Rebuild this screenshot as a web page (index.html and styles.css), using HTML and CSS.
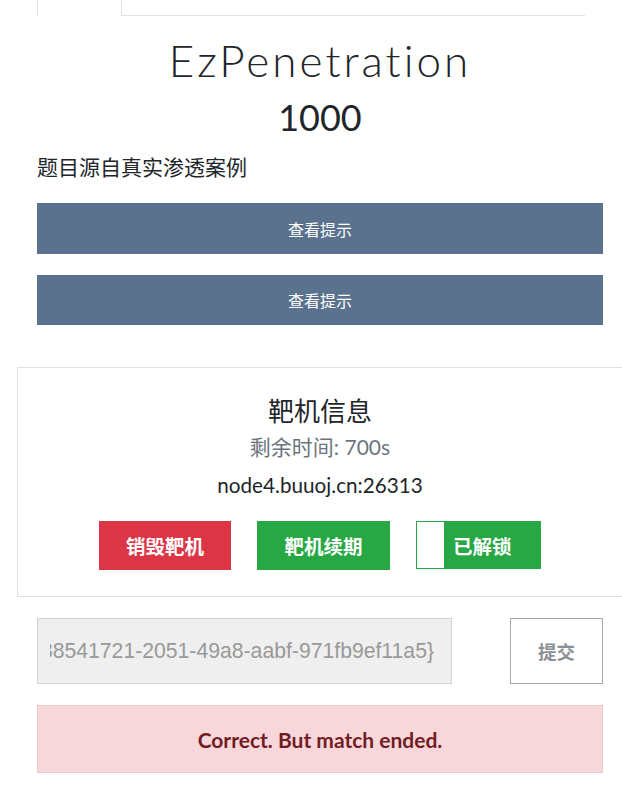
FILE: index.html
```html
<!DOCTYPE html>
<html lang="zh">
<head>
<meta charset="utf-8">
<title>EzPenetration</title>
<link rel="stylesheet" href="styles.css">
</head>
<body>
<div class="page">
  <div class="tabs">
    <div class="tab active"></div>
    <div class="tab-fill"></div>
  </div>

  <h2 class="chal-name">EzPenetration</h2>
  <h3 class="chal-value">1000</h3>
  <p class="chal-desc">题目源自真实渗透案例</p>

  <button class="hint-btn">查看提示</button>
  <button class="hint-btn second">查看提示</button>

  <div class="card">
    <h4 class="card-title">靶机信息</h4>
    <div class="remain">剩余时间: 700s</div>
    <div class="host">node4.buuoj.cn:26313</div>
    <div class="actions">
      <button class="act red">销毁靶机</button>
      <button class="act green">靶机续期</button>
      <button class="act unlocked"><span class="fill"></span><span class="label">已解锁</span></button>
    </div>
  </div>

  <div class="submit-row">
    <div class="flag-input">
      <div class="flag-clip"><span class="flag-text">flag{38541721-2051-49a8-aabf-971fb9ef11a5}</span></div>
    </div>
    <button class="submit-btn">提交</button>
  </div>

  <div class="alert">Correct. But match ended.</div>
</div>
</body>
</html>
```

FILE: styles.css
```css
html, body {
  margin: 0;
  padding: 0;
  overflow-x: hidden;
  background: #fff;
}

body {
  font-family: Lato, "Noto Sans CJK SC", sans-serif;
  color: #212529;
}

.page {
  margin-left: 37px;
  width: 566px;
  display: flex;
  flex-direction: column;
}

.tabs {
  display: flex;
  width: 548px;
  height: 16px;
}

.tab {
  width: 83px;
  height: 16px;
  border-left: 1px solid #dee2e6;
  border-right: 1px solid #dee2e6;
}

.tab-fill {
  flex: 1;
  border-bottom: 1px solid #dee2e6;
}

.chal-name {
  margin: 19px 0 0;
  text-align: center;
  font-family: Lato, "Noto Sans CJK SC", sans-serif;
  font-weight: 300;
  font-size: 44px;
  line-height: 50px;
  letter-spacing: 3px;
  color: #212529;
}

.chal-value {
  margin: 11px 0 0;
  text-align: center;
  font-weight: 400;
  font-size: 36px;
  line-height: 43px;
}

.chal-desc {
  margin: 13px 0 0;
  font-size: 21px;
  line-height: 30px;
}

.hint-btn {
  margin-top: 21px;
  height: 51px;
  border: none;
  background: #5b728f;
  color: #fff;
  font-family: Lato, "Noto Sans CJK SC", sans-serif;
  font-size: 16px;
  padding: 0;
}

.hint-btn.second {
  height: 50px;
}

.card {
  margin: 42px 0 0 -20px;
  width: 606px;
  height: 230px;
  box-sizing: border-box;
  border: 1px solid #dee2e6;
  display: flex;
  flex-direction: column;
  align-items: center;
}

.card-title {
  margin: 27px 0 0;
  font-weight: 400;
  font-size: 26px;
  line-height: 32px;
}

.remain {
  margin-top: 7px;
  font-size: 21px;
  line-height: 26px;
  color: #6c757d;
}

.host {
  margin-top: 12px;
  font-size: 20.7px;
  line-height: 26px;
  color: #212529;
}

.actions {
  margin-top: 23px;
  display: flex;
  gap: 26px;
}

.act {
  height: 49px;
  border: none;
  padding: 0;
  color: #fff;
  font-family: Lato, "Noto Sans CJK SC", sans-serif;
  font-weight: 700;
  font-size: 19.5px;
}

.act.red {
  width: 132px;
  background: #dc3545;
}

.act.green {
  width: 133px;
  background: #28a745;
}

.act.unlocked {
  width: 125px;
  height: 48px;
  background: #28a745;
  border: 1px solid #28a745;
  display: flex;
  align-items: center;
}

.act.unlocked .fill {
  width: 27px;
  align-self: stretch;
  background: #fff;
}

.act.unlocked .label {
  margin-left: 9px;
}

.submit-row {
  margin-top: 21px;
  display: flex;
  justify-content: space-between;
}

.flag-input {
  width: 415px;
  height: 66px;
  box-sizing: border-box;
  border: 1px solid #ced4da;
  background: #efefef;
  display: flex;
  align-items: center;
  padding: 0 17px 0 12px;
}

.flag-clip {
  flex: 1;
  display: flex;
  justify-content: flex-end;
  overflow: hidden;
}

.flag-text {
  white-space: nowrap;
  font-family: "Liberation Sans", Arial, sans-serif;
  font-size: 21.2px;
  color: #999;
}

.submit-btn {
  width: 93px;
  height: 66px;
  box-sizing: border-box;
  border: 1px solid #a3a8ad;
  background: #fff;
  color: #8a8f94;
  font-family: Lato, "Noto Sans CJK SC", sans-serif;
  font-weight: 700;
  font-size: 18.5px;
  padding: 0;
}

.alert {
  margin-top: 21px;
  height: 68px;
  box-sizing: border-box;
  border: 1px solid #f5c6cb;
  background: #f8d7da;
  color: #721c24;
  font-weight: 700;
  font-size: 21px;
  display: flex;
  align-items: center;
  justify-content: center;
}
```
